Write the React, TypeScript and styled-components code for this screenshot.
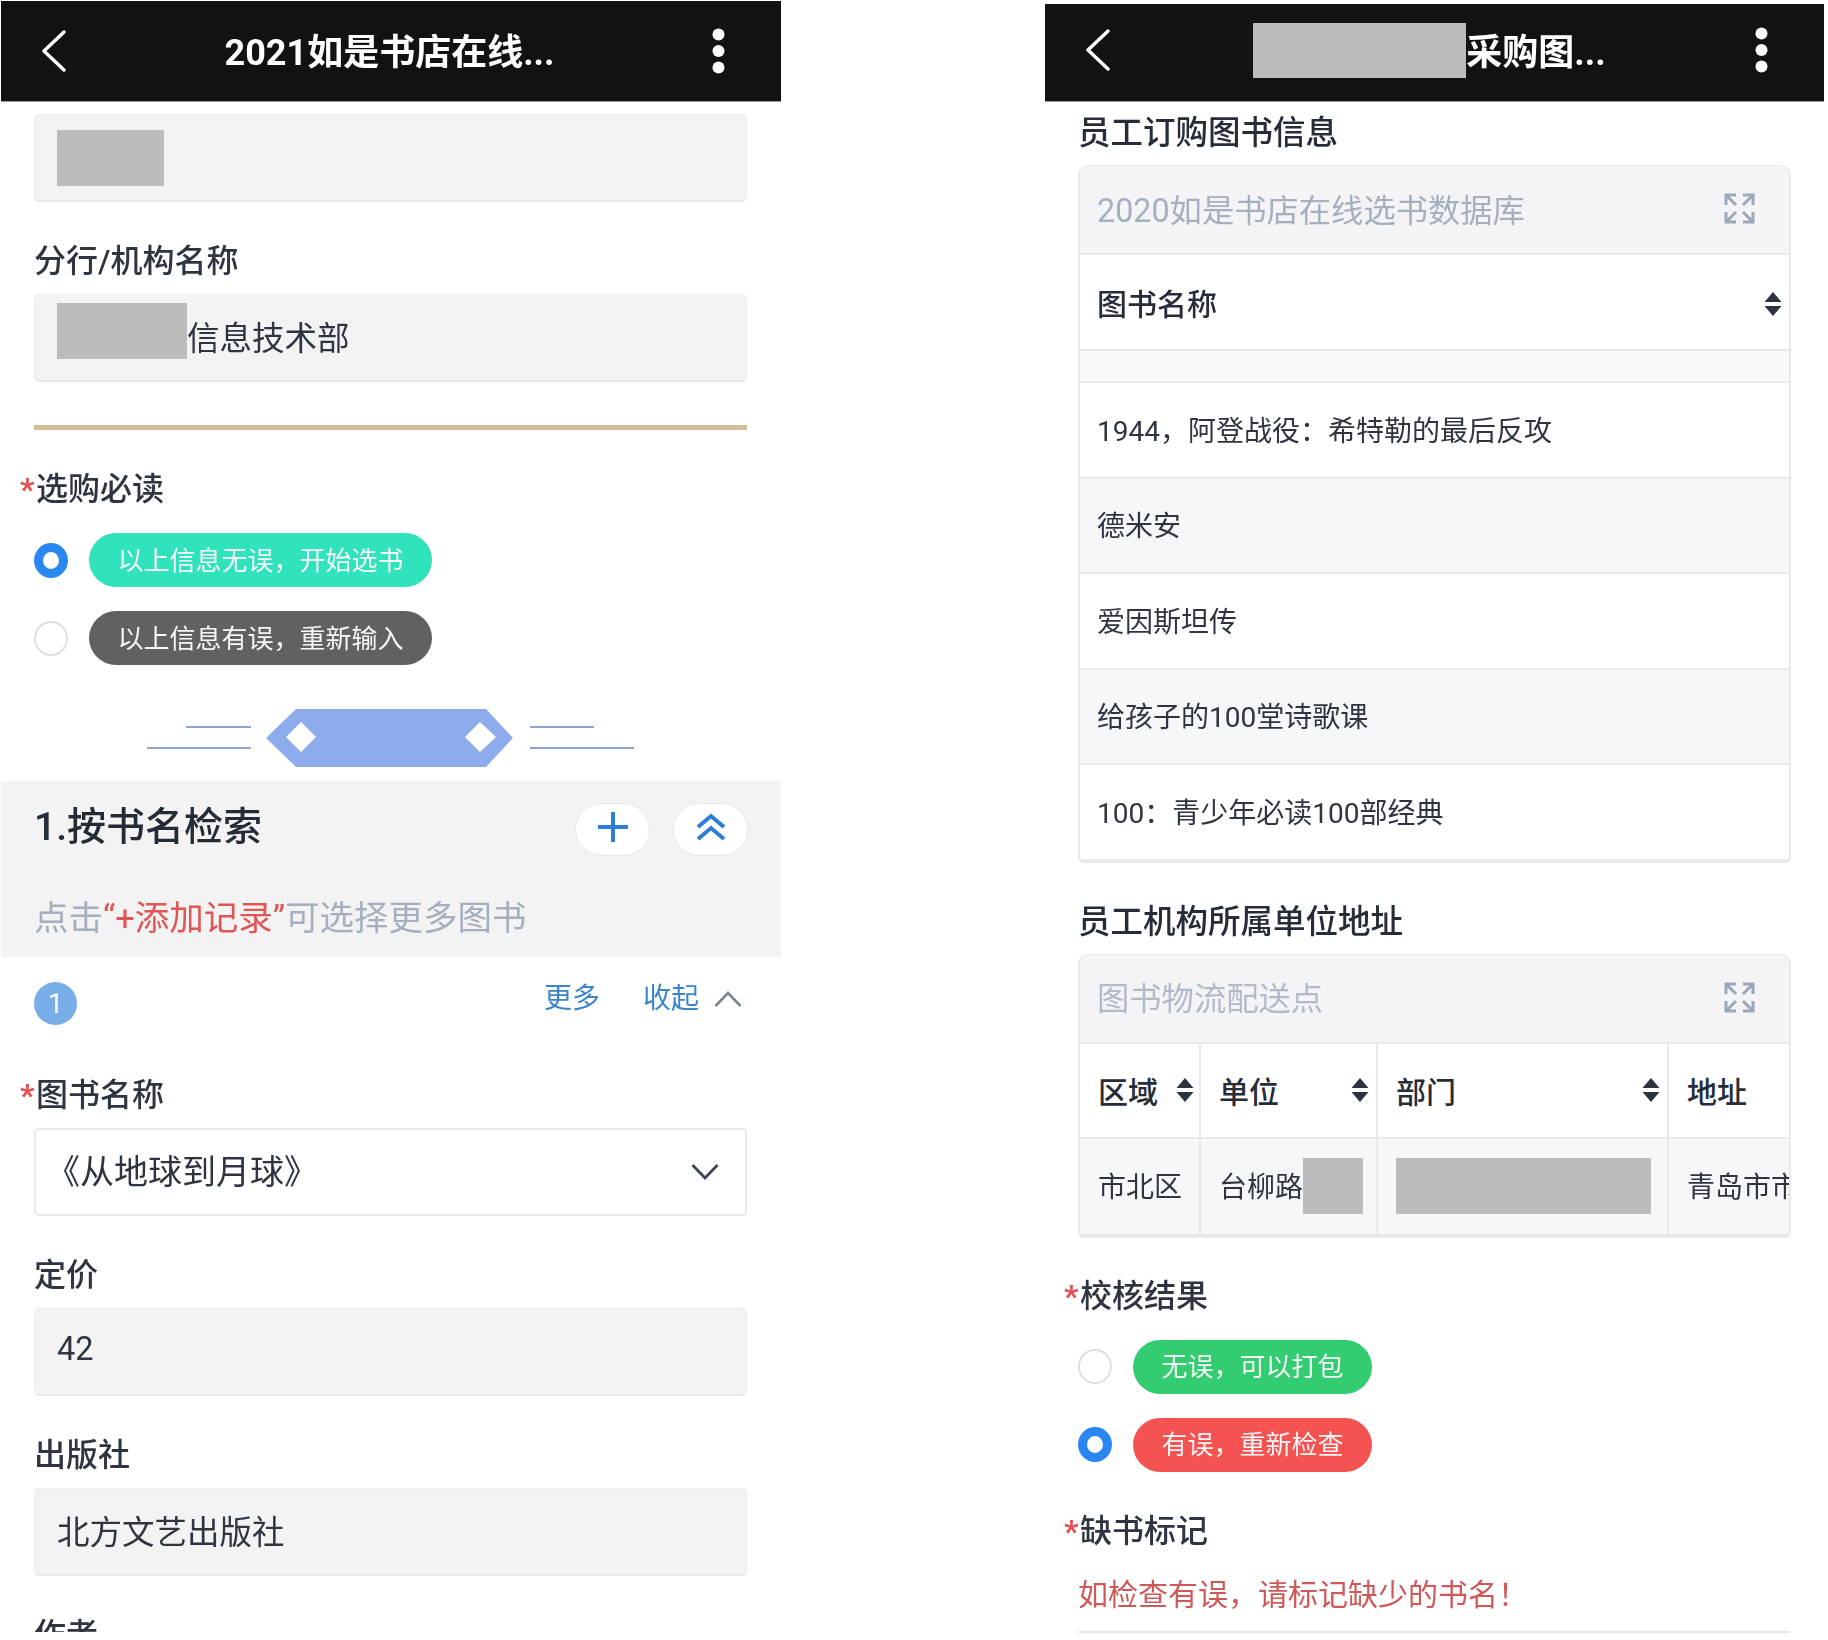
import React from "react";
import styled, { createGlobalStyle } from "styled-components";

const Global = createGlobalStyle`
  html, body { margin: 0; padding: 0; background: #fff; }
  body { font-family: Roboto, "Noto Sans CJK SC", sans-serif; color: #2e3540; }
  * { box-sizing: border-box; }
`;

const Page = styled.div`
  width: 1828px;
  height: 1640px;
  overflow: hidden;
  display: flex;
  align-items: flex-start;
  padding-left: 1px;
  gap: 264px;
  filter: blur(0.45px);
`;

const Panel = styled.div<{ $top: number; $height: number; $width: number }>`
  width: ${(p) => p.$width}px;
  height: ${(p) => p.$height}px;
  margin-top: ${(p) => p.$top}px;
  overflow: hidden;
  flex: none;
`;

const Header = styled.div<{ $height: number; $lift?: number }>`
  height: ${(p) => p.$height}px;
  background: #121212;
  border-bottom: 1px solid #9a9a9a;
  display: flex;
  align-items: center;
  justify-content: space-between;
  padding: 0 56px 0 40px;
  > svg { margin-bottom: ${(p) => p.$lift ?? 0}px; }
`;

const HeaderTitle = styled.div<{ $right: number; $down: number }>`
  color: #fff;
  font-size: 36px;
  font-weight: 700;
  line-height: 44px;
  display: flex;
  align-items: center;
  white-space: nowrap;
  flex: 1;
  justify-content: center;
  padding-right: ${(p) => p.$right}px;
  padding-top: ${(p) => p.$down}px;
`;

const Body = styled.div`
  padding: 0 34px 0 33px;
`;

const Redact = styled.span<{ $w: number; $h: number; $nudge?: number }>`
  display: inline-block;
  flex: none;
  width: ${(p) => p.$w}px;
  height: ${(p) => p.$h}px;
  background: #bcbcbc;
  transform: translateY(${(p) => p.$nudge ?? 0}px);
`;

const Label = styled.div<{ $top?: number; $bottom?: number }>`
  font-size: 32px;
  font-weight: 500;
  line-height: 46px;
  height: 44px;
  color: #2e3540;
  margin-top: ${(p) => p.$top ?? 36}px;
  margin-bottom: ${(p) => p.$bottom ?? 12}px;
  white-space: nowrap;
`;

const Star = styled.span`
  display: inline-block;
  width: 16px;
  margin-left: -14px;
  color: #e25050;
  font-size: 32px;
  font-weight: 700;
`;

const Field = styled.div<{ $top?: number }>`
  height: 88px;
  margin-top: ${(p) => p.$top ?? 0}px;
  background: #f3f3f3;
  border: 1px solid #ececec;
  border-bottom: 2px solid #e8e8e8;
  border-radius: 5px;
  padding: 0 22px 5px;
  display: flex;
  align-items: center;
  font-size: 32.5px;
  color: #2e3540;
`;

const SelectBox = styled(Field)`
  background: #fff;
  border: 2px solid #e9e9e9;
  justify-content: space-between;
  padding: 0 26px 5px 10px;
  font-size: 34px;
  > svg { margin-top: 5px; }
`;

const Rule = styled.div`
  height: 5px;
  margin-top: 43px;
  background: #d1bd98;
`;

const OptionList = styled.div`
  display: flex;
  flex-direction: column;
  gap: 24px;
  margin-top: 23px;
`;

const Option = styled.div`
  display: flex;
  align-items: center;
  gap: 21px;
`;

const Radio = styled.span<{ $on?: boolean }>`
  width: 34px;
  height: 35px;
  border-radius: 50%;
  background: #fff;
  flex: none;
  border: ${(p) => (p.$on ? "9px solid #2a86f0" : "2px solid #dedede")};
`;

const Pill = styled.span<{ $bg: string; $w: number }>`
  width: ${(p) => p.$w}px;
  height: 54px;
  border-radius: 27px;
  background: ${(p) => p.$bg};
  color: #f4f8f6;
  font-size: 26px;
  padding-bottom: 4px;
  display: flex;
  align-items: center;
  justify-content: center;
  white-space: nowrap;
`;

const Deco = styled.svg`
  display: block;
  margin: 44px auto 0;
`;

const SearchPanel = styled.div`
  margin-top: 14px;
  height: 176px;
  background: #f3f3f3;
  padding: 21px 33px 0 33px;
`;

const SearchTop = styled.div`
  display: flex;
  align-items: center;
  justify-content: space-between;
`;

const SearchTitle = styled.div`
  font-size: 39px;
  font-weight: 500;
  color: #252c36;
  line-height: 50px;
  margin-bottom: 4px;
`;

const RoundGroup = styled.div`
  display: flex;
  gap: 23px;
`;

const RoundButton = styled.div`
  width: 75px;
  height: 53px;
  border-radius: 27px;
  background: #fff;
  border: 1px solid #e8e8e8;
  padding-bottom: 4px;
  display: flex;
  align-items: center;
  justify-content: center;
`;

const Hint = styled.div`
  margin-top: 39px;
  font-size: 34.5px;
  line-height: 46px;
  color: #a5afbe;
  white-space: nowrap;
`;

const HintRed = styled.span`
  color: #e05555;
`;

const RecordBar = styled.div`
  display: flex;
  align-items: flex-start;
  justify-content: space-between;
  padding: 25px 5px 0 0;
  height: 69px;
`;

const Badge = styled.div`
  width: 43px;
  height: 43px;
  border-radius: 50%;
  background: #78aee8;
  color: #fff;
  font-size: 28px;
  display: flex;
  align-items: center;
  justify-content: center;
`;

const RecordActions = styled.div`
  display: flex;
  align-items: center;
  font-size: 28px;
  line-height: 32px;
  color: #3a85cc;
  margin-top: 1px;
`;

const ActionText = styled.span<{ $gap: number }>`
  margin-right: ${(p) => p.$gap}px;
`;

const SectionTitle = styled.div<{ $top: number }>`
  font-size: 32.5px;
  font-weight: 500;
  line-height: 46px;
  height: 44px;
  color: #262d38;
  margin-top: ${(p) => p.$top}px;
  margin-bottom: 11px;
  white-space: nowrap;
`;

const Card = styled.div`
  width: 713px;
  border: 2px solid #e8e9ec;
  border-top-width: 1px;
  border-bottom-width: 4px;
  border-radius: 10px 10px 6px 6px;
  overflow: hidden;
`;

const CardHead = styled.div`
  height: 89px;
  background: #f4f4f6;
  border-bottom: 2px solid #e8e9ec;
  display: flex;
  align-items: center;
  justify-content: space-between;
  padding: 0 34px 4px 17px;
  font-size: 32.3px;
  color: #a5afbe;
  > svg { margin-top: 2px; }
`;

const SoftHead = styled.span`
  color: #b2bac8;
`;

const ListHead = styled.div`
  height: 96px;
  background: #fff;
  border-bottom: 2px solid #e8e9ec;
  display: flex;
  align-items: center;
  justify-content: space-between;
  padding: 0 7px 0 17px;
  font-size: 30px;
  font-weight: 500;
  color: #262d38;
  > svg { margin-top: 4px; }
`;

const Spacer = styled.div`
  height: 32px;
  background: #f7f8fa;
  border-bottom: 2px solid #e8e9ec;
`;

const ListRow = styled.div<{ $alt?: boolean }>`
  height: 95.5px;
  background: ${(p) => (p.$alt ? "#f6f7f9" : "#fff")};
  border-bottom: 2px solid #e8e9ec;
  display: flex;
  align-items: center;
  padding: 0 17px 2px;
  font-size: 28px;
  color: #2e3540;
  &:last-child { border-bottom: 0; height: 93.5px; }
`;

const Grid = styled.div`
  display: grid;
  grid-template-columns: 121px 177px 291px 1fr;
  overflow: hidden;
`;

const HeadCell = styled.div`
  height: 95px;
  background: #fff;
  border-right: 2px solid #e8e9ec;
  border-bottom: 2px solid #e8e9ec;
  display: flex;
  align-items: center;
  justify-content: space-between;
  padding: 0 7px 0 18px;
  font-size: 30px;
  font-weight: 500;
  color: #262d38;
  white-space: nowrap;
  &:first-child { padding-right: 5px; }
  &:nth-child(4) { border-right: 0; }
`;

const BodyCell = styled.div`
  height: 95px;
  background: #f6f7f9;
  border-right: 2px solid #e8e9ec;
  display: flex;
  align-items: center;
  padding: 0 0 2px 18px;
  font-size: 28px;
  color: #2e3540;
  white-space: nowrap;
  overflow: hidden;
  &:nth-child(8) { border-right: 0; }
`;

const WarnText = styled.div`
  font-size: 30px;
  line-height: 44px;
  color: #cf5858;
  margin-top: 21px;
  white-space: nowrap;
`;

const BottomRule = styled.div`
  height: 2px;
  width: 712px;
  margin-top: 14px;
  background: #e8e8e8;
`;

const Back = () => (
  <svg width="26" height="42" viewBox="0 0 26 42" fill="none">
    <path d="M23 2 3 21l20 19" stroke="#fff" strokeWidth="3.4" strokeLinecap="round" strokeLinejoin="round" />
  </svg>
);

const Dots = () => (
  <svg width="13" height="46" viewBox="0 0 13 46" fill="#fff">
    <ellipse cx="6.5" cy="6.5" rx="6" ry="6" />
    <ellipse cx="6.5" cy="23" rx="6" ry="6" />
    <ellipse cx="6.5" cy="39.5" rx="6" ry="6" />
  </svg>
);

const Expand = () => (
  <svg width="31" height="31" viewBox="0 0 31 31" fill="none" stroke="#9aa8ba" strokeWidth="3">
    <path d="M2 12V2h10M2 2l10 10" />
    <path d="M29 12V2H19M29 2 19 12" />
    <path d="M2 19v10h10M2 29l10-10" />
    <path d="M29 19v10H19M29 29 19 19" />
  </svg>
);

const Sort = () => (
  <svg width="18" height="24" viewBox="0 0 18 24" fill="#2b3440">
    <path d="M9 0 17.500 10H.5z" />
    <path d="M9 24 17.500 14H.5z" />
  </svg>
);

const PlusIcon = () => (
  <svg width="30" height="30" viewBox="0 0 30 30" fill="none" stroke="#2b7fd9" strokeWidth="4">
    <path d="M15 0v30M0 15h30" />
  </svg>
);

const DoubleUp = () => (
  <svg width="30" height="28" viewBox="0 0 30 28" fill="none" stroke="#2b7fd9" strokeWidth="4">
    <path d="M2 14 15 3l13 11" />
    <path d="M2 26 15 15l13 11" />
  </svg>
);

const ChevronUp = () => (
  <svg width="28" height="16" viewBox="0 0 28 16" fill="none" stroke="#7c8591" strokeWidth="2.6">
    <path d="M1.500 15 14 2l12.500 13" />
  </svg>
);

const ChevronDown = () => (
  <svg width="28" height="16" viewBox="0 0 28 16" fill="none" stroke="#3c4550" strokeWidth="2.8">
    <path d="M1.500 1 14 14 26.500 1" />
  </svg>
);

const Ornament = () => (
  <Deco width="487" height="58" viewBox="0 0 487 58">
    <path d="M149 0H339L366 29 339 58H149L119 29z" fill="#8eacec" />
    <path d="M154 13 169 28 154 43 139 28z" fill="#fff" />
    <path d="M333 13 349 28 333 43 318 28z" fill="#fff" />
    <g stroke="#8fa6cc" strokeWidth="2">
      <path d="M39 18H104M0 39H104M383 18H447M383 39H487" />
    </g>
  </Deco>
);

const books = ["1944，阿登战役：希特勒的最后反攻", "德米安", "爱因斯坦传", "给孩子的100堂诗歌课", "100：青少年必读100部经典"];

export default function App() {
  return (
    <>
      <Global />
      <Page>
        <Panel $top={1} $height={1631} $width={780}>
          <Header $height={101}>
            <Back />
            <HeaderTitle $right={0} $down={4}>2021如是书店在线...</HeaderTitle>
            <Dots />
          </Header>
          <Body>
            <Field $top={12}>
              <Redact $w={107} $h={56} $nudge={3} />
            </Field>
            <Label>分行/机构名称</Label>
            <Field>
              <Redact $w={130} $h={56} $nudge={-4} />
              信息技术部
            </Field>
            <Rule />
            <Label $bottom={0}>
              <Star>*</Star>选购必读
            </Label>
            <OptionList>
              <Option>
                <Radio $on />
                <Pill $bg="#30e3bc" $w={343}>以上信息无误，开始选书</Pill>
              </Option>
              <Option>
                <Radio />
                <Pill $bg="#616161" $w={343}>以上信息有误，重新输入</Pill>
              </Option>
            </OptionList>
            <Ornament />
          </Body>
          <SearchPanel>
            <SearchTop>
              <SearchTitle>1.按书名检索</SearchTitle>
              <RoundGroup>
                <RoundButton><PlusIcon /></RoundButton>
                <RoundButton><DoubleUp /></RoundButton>
              </RoundGroup>
            </SearchTop>
            <Hint>
              点击<HintRed>“+添加记录”</HintRed>可选择更多图书
            </Hint>
          </SearchPanel>
          <Body>
            <RecordBar>
              <Badge>1</Badge>
              <RecordActions>
                <ActionText $gap={43}>更多</ActionText>
                <ActionText $gap={15}>收起</ActionText>
                <ChevronUp />
              </RecordActions>
            </RecordBar>
            <Label $top={46}>
              <Star>*</Star>图书名称
            </Label>
            <SelectBox>
              《从地球到月球》
              <ChevronDown />
            </SelectBox>
            <Label>定价</Label>
            <Field>42</Field>
            <Label>出版社</Label>
            <Field>北方文艺出版社</Field>
            <Label>作者</Label>
          </Body>
        </Panel>

        <Panel $top={4} $height={1636} $width={779}>
          <Header $height={98} $lift={6}>
            <Back />
            <HeaderTitle $right={7} $down={0}>
              <Redact $w={213} $h={55} $nudge={-2} />
              采购图...
            </HeaderTitle>
            <Dots />
          </Header>
          <Body>
            <SectionTitle $top={8}>员工订购图书信息</SectionTitle>
            <Card>
              <CardHead>
                2020如是书店在线选书数据库
                <Expand />
              </CardHead>
              <ListHead>
                图书名称
                <Sort />
              </ListHead>
              <Spacer />
              {books.map((b, i) => (
                <ListRow key={b} $alt={i % 2 === 1}>{b}</ListRow>
              ))}
            </Card>
            <SectionTitle $top={36}>员工机构所属单位地址</SectionTitle>
            <Card>
              <CardHead>
                <SoftHead>图书物流配送点</SoftHead>
                <Expand />
              </CardHead>
              <Grid>
                <HeadCell>区域<Sort /></HeadCell>
                <HeadCell>单位<Sort /></HeadCell>
                <HeadCell>部门<Sort /></HeadCell>
                <HeadCell>地址</HeadCell>
                <BodyCell>市北区</BodyCell>
                <BodyCell>台柳路<Redact $w={60} $h={56} $nudge={1} /></BodyCell>
                <BodyCell><Redact $w={255} $h={56} $nudge={1} /></BodyCell>
                <BodyCell>青岛市市北区</BodyCell>
              </Grid>
            </Card>
            <Label $top={35} $bottom={0}>
              <Star>*</Star>校核结果
            </Label>
            <OptionList>
              <Option>
                <Radio />
                <Pill $bg="#33cc70" $w={239}>无误，可以打包</Pill>
              </Option>
              <Option>
                <Radio $on />
                <Pill $bg="#f55252" $w={239}>有误，重新检查</Pill>
              </Option>
            </OptionList>
            <Label $bottom={0}>
              <Star>*</Star>缺书标记
            </Label>
            <WarnText>如检查有误，请标记缺少的书名！</WarnText>
            <BottomRule />
          </Body>
        </Panel>
      </Page>
    </>
  );
}
